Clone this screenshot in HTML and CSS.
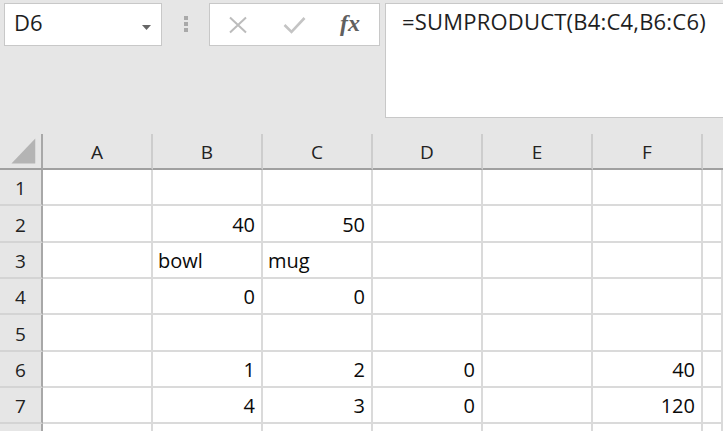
FILE: index.html
```html
<!DOCTYPE html>
<html>
<head>
<meta charset="utf-8">
<link rel="stylesheet" href="styles.css">
</head>
<body>
<div class="toolbar">
  <div class="namebox">
    <span class="name">D6</span>
    <svg class="caret" width="9" height="5" viewBox="0 0 9 5"><polygon points="0,0 9,0 4.5,5" fill="#666"/></svg>
  </div>
  <div class="grip"><i></i><i></i><i></i></div>
  <div class="fnbox">
    <span class="slot"><svg width="20" height="18" viewBox="0 0 20 18"><path d="M2 1.5 L18 16.5 M18 1.5 L2 16.5" stroke="#bcbcbc" stroke-width="2" fill="none"/></svg></span>
    <span class="slot"><svg width="23" height="18" viewBox="0 0 23 18"><polyline points="1.5,9 8.5,16 21.5,2" stroke="#c4c4c4" stroke-width="2.6" fill="none"/></svg></span>
    <span class="slot fx">fx</span>
  </div>
  <div class="formula">=SUMPRODUCT(B4:C4,B6:C6)</div>
</div>
<div class="sheet">
  <div class="h corner"><svg width="43" height="36" viewBox="0 0 43 36"><polygon points="12,31 37,5 37,31" fill="#b4b4b4"/></svg></div>
  <div class="h col">A</div><div class="h col">B</div><div class="h col">C</div><div class="h col">D</div><div class="h col">E</div><div class="h col">F</div><div class="h col last"></div>

  <div class="h row">1</div><div class="c"></div><div class="c"></div><div class="c"></div><div class="c"></div><div class="c"></div><div class="c"></div><div class="c"></div>
  <div class="h row">2</div><div class="c"></div><div class="c n">40</div><div class="c n">50</div><div class="c"></div><div class="c"></div><div class="c"></div><div class="c"></div>
  <div class="h row">3</div><div class="c"></div><div class="c">bowl</div><div class="c">mug</div><div class="c"></div><div class="c"></div><div class="c"></div><div class="c"></div>
  <div class="h row">4</div><div class="c"></div><div class="c n">0</div><div class="c n">0</div><div class="c"></div><div class="c"></div><div class="c"></div><div class="c"></div>
  <div class="h row">5</div><div class="c"></div><div class="c"></div><div class="c"></div><div class="c"></div><div class="c"></div><div class="c"></div><div class="c"></div>
  <div class="h row">6</div><div class="c"></div><div class="c n">1</div><div class="c n">2</div><div class="c n">0</div><div class="c"></div><div class="c n">40</div><div class="c"></div>
  <div class="h row">7</div><div class="c"></div><div class="c n">4</div><div class="c n">3</div><div class="c n">0</div><div class="c"></div><div class="c n">120</div><div class="c"></div>
  <div class="h row tail"></div><div class="c tail"></div><div class="c tail"></div><div class="c tail"></div><div class="c tail"></div><div class="c tail"></div><div class="c tail"></div><div class="c tail"></div>
</div>
</body>
</html>
```
FILE: styles.css
```css
html, body {
  margin: 0;
  padding: 0;
  background: #e6e6e6;
  overflow: hidden;
  width: 723px;
  height: 431px;
}
body {
  font-family: "Open Sans", "Noto Sans", sans-serif;
  color: #000;
}
.toolbar {
  display: flex;
  align-items: flex-start;
  height: 134px;
  padding: 3px 0 0 4px;
  box-sizing: border-box;
}
.toolbar > * {
  flex: none;
}
.namebox {
  box-sizing: border-box;
  width: 158px;
  height: 43px;
  background: #fff;
  border: 1px solid #c8c8c8;
  display: flex;
  align-items: flex-start;
  justify-content: space-between;
  padding: 3px 10px 0 9px;
}
.name {
  font-size: 22px;
  line-height: 30px;
  color: #1e1e1e;
}
.caret {
  margin-top: 18px;
}
.grip {
  margin-left: 22px;
  margin-top: 13px;
  display: flex;
  flex-direction: column;
  gap: 2px;
}
.grip i {
  display: block;
  width: 4px;
  height: 4px;
  background: #a9a9a9;
}
.fnbox {
  box-sizing: border-box;
  margin-left: 21px;
  width: 171px;
  height: 43px;
  background: #fff;
  border: 1px solid #c8c8c8;
  display: flex;
  align-items: center;
}
.slot {
  width: 56px;
  display: flex;
  justify-content: center;
  align-items: center;
}
.fx {
  font-family: "Liberation Serif", "DejaVu Serif", serif;
  font-style: italic;
  font-weight: bold;
  font-size: 24px;
  color: #606060;
  margin-top: -2px;
}
.formula {
  box-sizing: border-box;
  margin-left: 5px;
  width: 360px;
  height: 115px;
  background: #fff;
  border: 1px solid #c8c8c8;
  padding: 2px 0 0 16px;
  font-size: 22px;
  line-height: 30px;
  color: #1e1e1e;
  white-space: nowrap;
  letter-spacing: 0.2px;
}
.sheet {
  display: grid;
  grid-template-columns: 43px repeat(6, 110px) 1fr;
  grid-template-rows: 36px 36px 37px 36px 36px 37px 36px 36px 7px;
}
.h {
  background: #e6e6e6;
  box-sizing: border-box;
  display: flex;
  align-items: center;
  justify-content: center;
  color: #222;
  font-size: 19px;
}
.corner {
  border-right: 2px solid #a8a8a8;
  border-bottom: 2px solid #a0a0a0;
}
.col {
  border-right: 2px solid #cdcdcd;
  border-bottom: 2px solid #a0a0a0;
  padding-top: 1px;
}
.col.last {
  border-right: none;
}
.row {
  border-right: 2px solid #a8a8a8;
  border-bottom: 2px solid #d4d4d4;
  padding-top: 2px;
}
.c {
  background: #fff;
  box-sizing: border-box;
  border-right: 2px solid #dadada;
  border-bottom: 2px solid #dadada;
  display: flex;
  align-items: flex-end;
  padding: 0 6px 4px 5px;
  font-size: 20px;
  line-height: 24px;
  color: #0a0a0a;
}
.c.n {
  justify-content: flex-end;
}
.tail {
  border-bottom: none;
}
```
